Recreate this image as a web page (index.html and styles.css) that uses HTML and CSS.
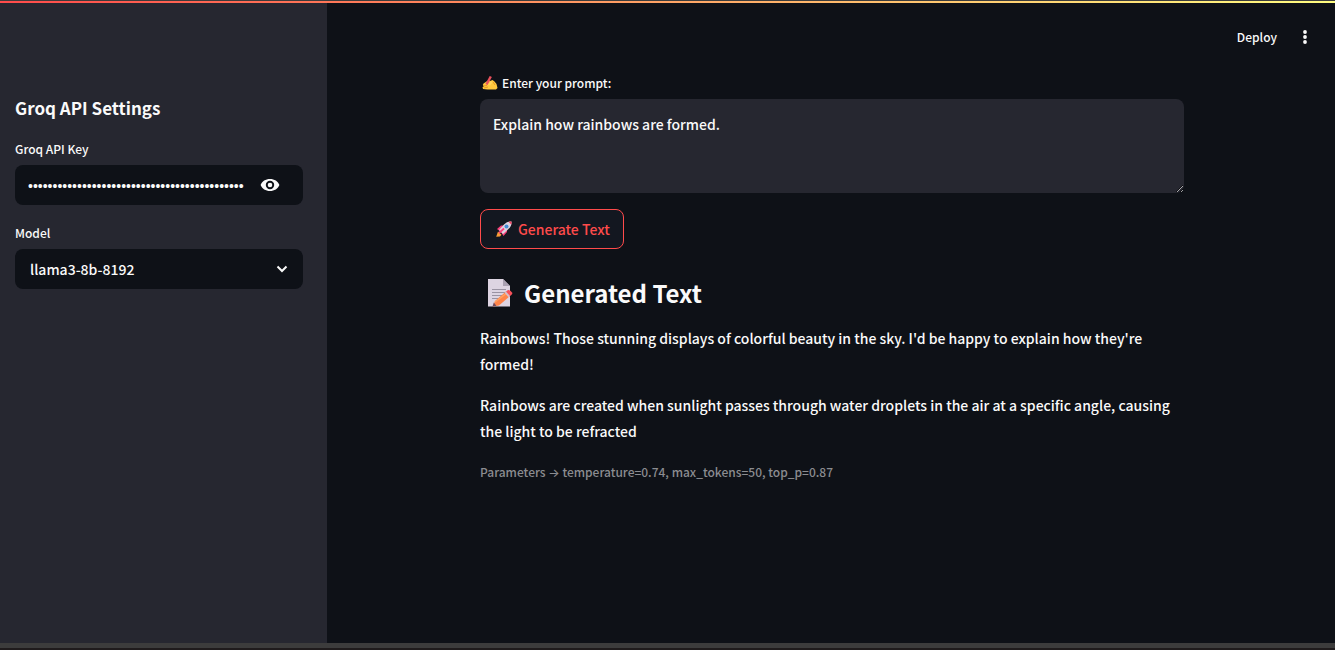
FILE: index.html
```html
<!DOCTYPE html>
<html lang="en">
<head>
<meta charset="utf-8">
<title>Groq Text Generator</title>
<link rel="stylesheet" href="styles.css">
</head>
<body>
<div class="decoration"></div>
<div class="app">
  <aside class="sidebar">
    <h2 class="sidebar-title">Groq API Settings</h2>
    <div class="field">
      <label class="label" for="key">Groq API Key</label>
      <div class="control">
        <input class="key" id="key" type="password" value="gsk_abcdefghijklmnopqrstuvwxyz0123456789abcdefghijklmnop">
        <button class="icon-button" type="button" aria-label="Show key">
          <svg class="eye" viewBox="0 0 20 14"><path fill="currentColor" fill-rule="evenodd" d="M10 1C5.6 1 2 3.300.6 7 2 10.700 5.600 13 10 13s8-2.300 9.400-6C18 3.300 14.400 1 10 1Zm0 10.200a4.200 4.200 0 1 1 0-8.400 4.200 4.200 0 0 1 0 8.400Zm0-1.900a2.300 2.300 0 1 0 0-4.600 2.300 2.300 0 0 0 0 4.600Z"/></svg>
        </button>
      </div>
    </div>
    <div class="field">
      <label class="label" for="model">Model</label>
      <div class="control">
        <select class="model" id="model"><option>llama3-8b-8192</option></select>
        <svg class="chevron" viewBox="0 0 12 8"><path d="M1.500 1.500 6 6l4.500-4.500" fill="none" stroke="currentColor" stroke-width="2"/></svg>
      </div>
    </div>
  </aside>
  <div class="page">
    <header class="toolbar">
      <button class="deploy" type="button">Deploy</button>
      <button class="menu" type="button" aria-label="Main menu">
        <svg class="dots" viewBox="0 0 4 14"><g fill="currentColor"><circle cx="2" cy="2" r="1.900"/><circle cx="2" cy="7" r="1.900"/><circle cx="2" cy="12" r="1.900"/></g></svg>
      </button>
    </header>
    <main class="content">
      <label class="label prompt-label" for="prompt">
        <svg class="hand" viewBox="0 0 16 14"><path fill="#ffc83d" d="M1.500 7.500 6 4.500 8 5l2.500-1 2 1.600 2 2.400 1 4L14 13.500H5.500L1 13 .5 11 2 10.500.8 9Z"/><path d="m1 10 4-.5M2 12l4-1M11 6l2 3" stroke="#e59a24" fill="none"/><path d="M4.500 8.500 8.800.5" stroke="#e8505b" stroke-width="2.400"/><path d="M6 8.500 9 5l1.500 1.500L8 9.500Z" fill="#ffd65c"/></svg>
        <span>Enter your prompt:</span>
      </label>
      <textarea class="prompt" id="prompt">Explain how rainbows are formed.</textarea>
      <button class="generate" type="button">
        <svg class="rocket" viewBox="0 0 18 18"><path d="M2 9 6 5.500h5L6 12ZM12 7v5l-3.500 4L6 12Z" fill="#f8417a"/><path d="M4 10 9 4.500Q12.500 1 16.500 1.500 17 6 13 9.500L8 14Z" fill="#dcd2df"/><path d="M13.500 1.700 16.500 1.500 16.400 4.700Z" fill="#fa3f5e"/><path d="m3 11.500 3.500 3.300L5 16.500l-3.800.3Z" fill="#f99b36"/><path d="m4 13 5-4.500" stroke="#f8417a" stroke-width="1.800"/><circle cx="11.500" cy="6.500" r="2" fill="#438bd6"/></svg>
        <span>Generate Text</span>
      </button>
      <h1 class="heading">
        <svg class="memo" viewBox="0 0 26 28"><path d="M1 0h15l7 7v20.500H1Z" fill="#ddd4e2"/><path d="M16 0v7h7Z" fill="#aaa1b2"/><path d="M5 10.500h14M5 13.500h14M5 16.500h12M5 19.500h7" stroke="#9a93a3" fill="none"/><path d="m8 22 11-9.500 4 4.500L12 26.500l-6 1Z" fill="#ff8348"/><path d="m8 23 12-9" stroke="#ffa263" stroke-width="1.500"/><path d="m18 13.500 3-2.500q2-.5 4.500 3-.3 1.500-3 3.500Z" fill="#f7515a"/><path d="m17.500 13.800 1.500-1.300 4 4.600-1.500 1.200Z" fill="#d4c1cb"/><path d="m6.800 23.500 2.500 3.300-3.800.7Z" fill="#6e485c"/></svg>
        <span>Generated Text</span>
      </h1>
      <p class="paragraph">Rainbows! Those stunning displays of colorful beauty in the sky. I'd be happy to explain how they're formed!</p>
      <p class="paragraph">Rainbows are created when sunlight passes through water droplets in the air at a specific angle, causing the light to be refracted</p>
      <p class="caption">Parameters <span class="arrow">→</span> temperature=0.74, max_tokens=50, top_p=0.87</p>
    </main>
  </div>
</div>
<footer class="frame"></footer>
</body>
</html>
```

FILE: styles.css
```css
* { box-sizing: border-box; }
body {
  margin: 0;
  min-height: 100vh;
  display: flex;
  flex-direction: column;
  background: #0e1117;
  color: #fafafa;
  font: 500 14px/26px "Noto Sans CJK SC", "Noto Sans", sans-serif;
}
button, input, select, textarea { font: inherit; color: inherit; }
button { background: none; border: 0; padding: 0; cursor: pointer; }
svg { flex: none; display: block; }
h1, h2, p { margin: 0; }

.decoration {
  height: 3px;
  border-top: 1px solid #3c3c3c;
  background: linear-gradient(90deg, #ff4b4b, #fffd80);
}
.app { flex: 1; display: flex; }
.frame { height: 7px; background: #3c3c3c; border-bottom: 2px solid #1f1b1c; }

.sidebar {
  width: 327px;
  flex: none;
  padding: 92px 24px 24px 15px;
  background: #262730;
}
.sidebar-title { font-size: 17px; line-height: 26px; font-weight: 700; }
.field { margin-top: 18px; }
.label { display: block; font-size: 12px; line-height: 20px; margin-bottom: 6px; }
.control {
  display: flex;
  align-items: center;
  height: 40px;
  border-radius: 8px;
  background: #0e1117;
}
.key {
  flex: 1;
  min-width: 0;
  margin: 0 16px 0 13px;
  padding: 2px 0 0;
  border: 0;
  background: none;
  outline: 0;
  font: 14px/24px "Liberation Sans", sans-serif;
}
.icon-button { margin-right: 23px; }
.eye { width: 20px; height: 14px; }
.model {
  flex: 1;
  height: 40px;
  margin-right: -28px;
  padding: 0 28px 0 15px;
  border: 0;
  background: none;
  appearance: none;
  outline: 0;
}
.chevron { width: 12px; height: 8px; margin-right: 15px; pointer-events: none; }

.page { flex: 1; min-width: 0; padding-left: 2px; }
.toolbar {
  display: flex;
  align-items: center;
  justify-content: flex-end;
  gap: 26px;
  height: 68px;
  padding-right: 28px;
}
.deploy { font-size: 12px; line-height: 20px; }
.dots { width: 4px; height: 14px; }

.content {
  width: 100%;
  max-width: 704px;
  margin: 0 auto;
  display: flex;
  flex-direction: column;
  align-items: flex-start;
}
.prompt-label { display: flex; align-items: center; gap: 4px; padding: 2px 0 0 2px; }
.hand { width: 16px; height: 14px; }
.prompt {
  display: block;
  width: 100%;
  height: 94px;
  padding: 12px 13px;
  border: 0;
  border-radius: 8px;
  background: #262730;
  outline: 0;
  resize: vertical;
}
.generate {
  display: flex;
  align-items: center;
  gap: 5px;
  height: 40px;
  margin-top: 16px;
  padding: 0 13px 0 14px;
  border: 1px solid #ff4b4b;
  border-radius: 8px;
  background: #131720;
  color: #ff4b4b;
}
.rocket { width: 18px; height: 18px; }
.heading {
  display: flex;
  align-items: center;
  gap: 11px;
  margin: 26px 0 14px;
  padding-left: 7px;
  font-size: 24px;
  line-height: 36px;
}
.memo { width: 26px; height: 28px; }
.paragraph { margin-bottom: 15px; }
.caption { font-size: 12px; line-height: 26px; color: #8b8c90; }
.arrow { font-family: Inter, sans-serif; }
```
